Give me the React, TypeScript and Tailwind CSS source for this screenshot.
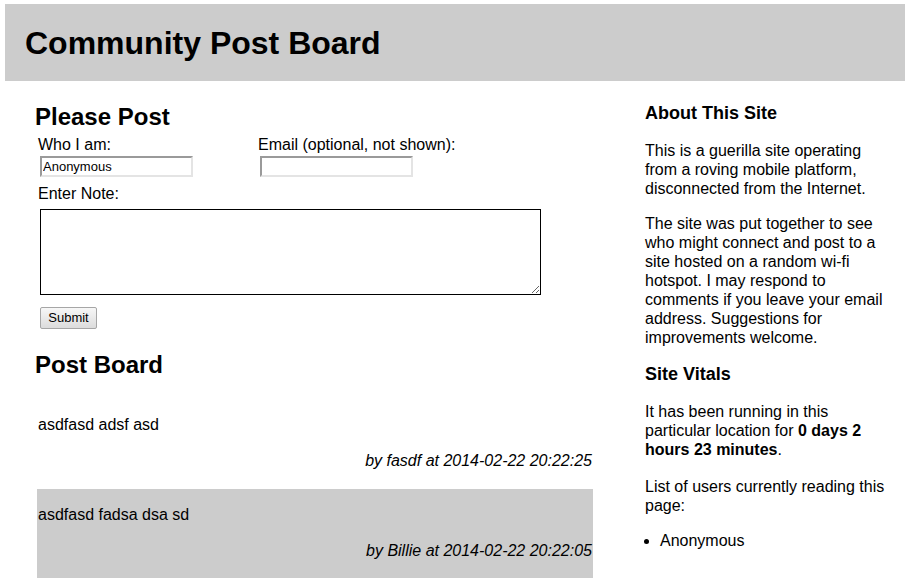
import { useState } from "react";

type Post = {
  id: number;
  text: string;
  author: string;
  time: string;
};

const posts: Post[] = [
  { id: 1, text: "asdfasd adsf asd", author: "fasdf", time: "2014-02-22 20:22:25" },
  { id: 2, text: "asdfasd fadsa dsa sd", author: "Billie", time: "2014-02-22 20:22:05" },
];

const inputClass =
  "h-[21px] w-[153px] border-2 border-t-[#9a9a9a] border-l-[#9a9a9a] border-r-[#e4e4e4] border-b-[#e4e4e4] bg-white px-[1px] text-[13px] leading-[15px] text-black outline-none";

const App = () => {
  const [name, setName] = useState("Anonymous");
  const [email, setEmail] = useState("");
  const [note, setNote] = useState("");

  return (
    <div className="min-h-[586px] bg-white px-[5px] pt-[4px] font-['Liberation_Sans',Arial,sans-serif] text-black">
      <header className="flex h-[77px] w-[900px] items-center bg-[#cccccc] pl-[20px]">
        <h1 className="text-[32px] font-bold leading-none">Community Post Board</h1>
      </header>

      <div className="flex">
        <main className="ml-[29px] w-[559px]">
          <h2 className="mt-[22px] pl-[1px] text-[24px] font-bold leading-[28px]">Please Post</h2>

          <form className="pl-[4px]" onSubmit={(e) => e.preventDefault()}>
            <div className="mt-[4px] flex">
              <div className="w-[220px]">
                <label className="block text-[16px] leading-[19px]">Who I am:</label>
                <input
                  className={`mt-[2px] ml-[2px] ${inputClass}`}
                  value={name}
                  onChange={(e) => setName(e.target.value)}
                />
              </div>
              <div>
                <label className="block text-[16px] leading-[19px]">Email (optional, not shown):</label>
                <input
                  className={`mt-[2px] ml-[2px] ${inputClass}`}
                  value={email}
                  onChange={(e) => setEmail(e.target.value)}
                />
              </div>
            </div>

            <label className="mt-[6px] block text-[16px] leading-[19px]">Enter Note:</label>
            <textarea
              className="mt-[6px] ml-[2px] block h-[86px] w-[501px] border border-black bg-white p-[2px] text-[13px] outline-none"
              value={note}
              onChange={(e) => setNote(e.target.value)}
            />

            <button
              type="submit"
              className="mt-[12px] ml-[2px] h-[22px] w-[57px] rounded-[2px] border border-[#a6a6a6] bg-linear-to-b from-[#f7f7f7] to-[#dcdcdc] text-[13px] leading-[20px] text-black"
            >
              Submit
            </button>
          </form>

          <h2 className="mt-[22px] pl-[1px] text-[24px] font-bold leading-[28px]">Post Board</h2>

          <div className="mt-[20px] ml-[3px] flex w-[556px] flex-col gap-[1px]">
            {posts.map((post, i) => (
              <div
                key={post.id}
                className={`h-[89px] px-[1px] pt-[16px] ${i % 2 === 1 ? "bg-[#cccccc]" : ""}`}
              >
                <p className="text-[16px] leading-[19px]">{post.text}</p>
                <p className="mt-[17px] text-right text-[16px] italic leading-[19px]">
                  by {post.author} at {post.time}
                </p>
              </div>
            ))}
          </div>
        </main>

        <aside className="ml-[52px] w-[250px] text-[16px] leading-[19px]">
          <h3 className="mt-[22px] text-[18px] font-bold leading-[21px]">About This Site</h3>
          <p className="mt-[17px]">
            This is a guerilla site operating from a roving mobile platform, disconnected from the
            Internet.
          </p>
          <p className="mt-[16px]">
            The site was put together to see who might connect and post to a site hosted on a
            random wi-fi hotspot. I may respond to comments if you leave your email address.
            Suggestions for improvements welcome.
          </p>

          <h3 className="mt-[17px] text-[18px] font-bold leading-[21px]">Site Vitals</h3>
          <p className="mt-[17px]">
            It has been running in this particular location for{" "}
            <b>0 days 2 hours 23 minutes</b>.
          </p>
          <p className="mt-[18px]">List of users currently reading this page:</p>
          <ul className="mt-[16px] list-disc pl-[15px]">
            <li>Anonymous</li>
          </ul>
        </aside>
      </div>
    </div>
  );
};

export default App;
